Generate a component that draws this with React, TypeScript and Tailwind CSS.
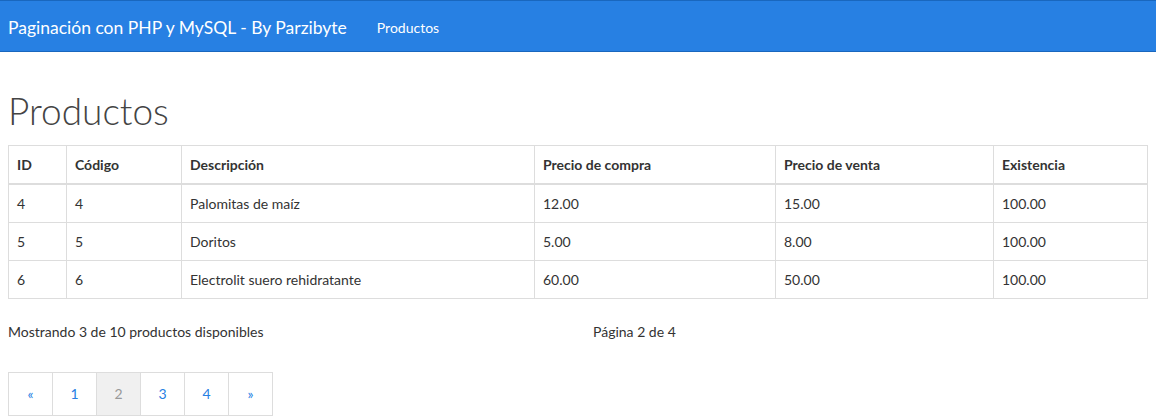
const productos = [
  { id: 4, codigo: "4", descripcion: "Palomitas de maíz", compra: "12.00", venta: "15.00", existencia: "100.00" },
  { id: 5, codigo: "5", descripcion: "Doritos", compra: "5.00", venta: "8.00", existencia: "100.00" },
  { id: 6, codigo: "6", descripcion: "Electrolit suero rehidratante", compra: "60.00", venta: "50.00", existencia: "100.00" },
];

const paginas = ["«", "1", "2", "3", "4", "»"];

export default function App() {
  return (
    <div className="min-h-[420px] bg-white text-[14px] leading-[21px] text-[#333] font-['Lato',sans-serif]">
      {/* Barra de navegación */}
      <nav className="flex h-[52px] items-center border-y border-[#1967be] bg-[#2780e3] px-2 pt-[3px]">
        <span className="text-[17.5px] text-white">Paginación con PHP y MySQL - By Parzibyte</span>
        <span className="ml-[30px] text-[14px] text-white">Productos</span>
      </nav>

      <div className="px-2">
        <h1 className="mt-[39px] mb-[13px] text-[37px] leading-[1.1] font-light text-[#444]">Productos</h1>

        <table className="w-full border-collapse border border-[#ddd]">
          <colgroup>
            <col className="w-[58px]" />
            <col className="w-[115px]" />
            <col className="w-[353px]" />
            <col className="w-[241px]" />
            <col className="w-[218px]" />
            <col />
          </colgroup>
          <thead>
            <tr className="border-b-2 border-[#ddd]">
              {["ID", "Código", "Descripción", "Precio de compra", "Precio de venta", "Existencia"].map((h) => (
                <th key={h} className="border border-b-2 border-[#ddd] p-2 text-left font-bold">
                  {h}
                </th>
              ))}
            </tr>
          </thead>
          <tbody>
            {productos.map((p) => (
              <tr key={p.id}>
                <td className="border border-[#ddd] p-2">{p.id}</td>
                <td className="border border-[#ddd] p-2">{p.codigo}</td>
                <td className="border border-[#ddd] p-2">{p.descripcion}</td>
                <td className="border border-[#ddd] p-2">{p.compra}</td>
                <td className="border border-[#ddd] p-2">{p.venta}</td>
                <td className="border border-[#ddd] p-2">{p.existencia}</td>
              </tr>
            ))}
          </tbody>
        </table>

        <div className="mt-[22px] grid grid-cols-[585px_1fr]">
          <p>Mostrando 3 de 10 productos disponibles</p>
          <p>Página 2 de 4</p>
        </div>

        <ul className="mt-[30px] flex">
          {paginas.map((p, i) => (
            <li
              key={p}
              className={
                "-ml-px flex h-[44px] w-[45px] items-center justify-center border border-[#ddd] first:ml-0 " +
                (p === "2" ? "bg-[#f0f0f0] text-[#999]" : "bg-white text-[#2780e3]")
              }
            >
              {i === 0 || i === paginas.length - 1 ? <span className="text-[14px]">{p}</span> : p}
            </li>
          ))}
        </ul>
      </div>
    </div>
  );
}
